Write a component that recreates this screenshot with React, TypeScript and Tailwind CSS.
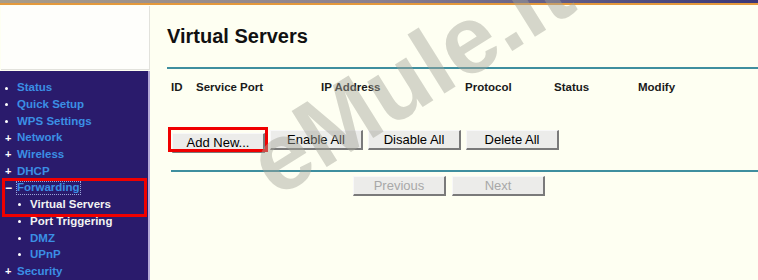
const menu = [
  { label: 'Status', mark: 'dot', level: 0 },
  { label: 'Quick Setup', mark: 'dot', level: 0 },
  { label: 'WPS Settings', mark: 'dot', level: 0 },
  { label: 'Network', mark: 'plus', level: 0 },
  { label: 'Wireless', mark: 'plus', level: 0 },
  { label: 'DHCP', mark: 'plus', level: 0 },
  { label: 'Forwarding', mark: 'minus', level: 0, focused: true },
  { label: 'Virtual Servers', mark: 'dot', level: 1, active: true },
  { label: 'Port Triggering', mark: 'dot', level: 1, active: true },
  { label: 'DMZ', mark: 'dot', level: 1 },
  { label: 'UPnP', mark: 'dot', level: 1 },
  { label: 'Security', mark: 'plus', level: 0 },
];

const columns = ['ID', 'Service Port', 'IP Address', 'Protocol', 'Status', 'Modify'];

function Mark({ type }: { type: string }) {
  if (type === 'plus') return <span className="w-[9px] text-white text-[11px] leading-none font-bold">+</span>;
  if (type === 'minus') return <span className="w-[9px] text-white text-[12px] leading-none font-bold">−</span>;
  return (
    <span className="w-[9px] flex items-center">
      <span className="w-[3px] h-[3px] rounded-full bg-white" />
    </span>
  );
}

function WinButton({ label, disabled }: { label: string; disabled?: boolean }) {
  return (
    <button
      className={
        'w-[93px] h-[20px] bg-[#ececea] border border-t-[#f8f8f8] border-l-[#f8f8f8] border-r-[2px] border-b-[2px] border-r-[#7a7a7a] border-b-[#7a7a7a] text-[13px] leading-none ' +
        (disabled ? 'text-[#a8a8a8]' : 'text-black')
      }
    >
      {label}
    </button>
  );
}

export default function App() {
  return (
    <div className="relative w-[758px] h-[280px] overflow-hidden bg-[#fefff2] font-['Liberation_Sans',Arial,sans-serif]">
      {/* top strip */}
      <div className="h-[3px] bg-gradient-to-r from-[#a89c88] via-[#8a8090] to-[#3a3678]" />
      <div className="h-[2px] bg-[#e4993c]" />

      <div className="flex h-[275px]">
        {/* Sidebar */}
        <div className="relative w-[150px] flex flex-col">
          <div className="h-[64px] mt-[1px] ml-[1px] bg-[#fefefb] border-r border-b border-[#e2e2dc]" />
          <div className="mt-[1px] flex-1 bg-[#2a1b6c] border-r-[2px] border-[#b3a8d6] pt-[9px]">
            {menu.map((m) => (
              <div
                key={m.label}
                className={'flex items-center h-[16.7px] ' + (m.level ? 'pl-[18px]' : 'pl-[5px]')}
              >
                <Mark type={m.mark} />
                <span
                  className={
                    'ml-[3px] text-[11.5px] font-bold leading-none ' +
                    (m.active ? 'text-[#f2f2f2]' : 'text-[#3b8fe4]') +
                    (m.focused ? ' outline-1 outline-dotted outline-[#9aa6d8]' : '')
                  }
                >
                  {m.label}
                </span>
              </div>
            ))}
          </div>
          <div className="absolute left-[2px] top-[173px] w-[145px] h-[39px] border-[3px] border-[#f00000]" />
        </div>

        {/* Main */}
        <div className="flex-1 pl-[17px]">
          <h1 className="mt-[19px] text-[20px] font-bold text-[#111] leading-[24px]">Virtual Servers</h1>
          <div className="mt-[19px] h-[2px] bg-[#3f8f9f]" />
          <div className="mt-[11px] pl-[4px] grid grid-cols-[25px_125px_144px_89px_84px_auto] text-[11.5px] font-bold text-[#1a1a1a] leading-[14px]">
            {columns.map((c) => (
              <span key={c}>{c}</span>
            ))}
          </div>
          <div className="mt-[36px] pl-[5px] flex gap-[5px]">
            <div className="relative">
              <WinButton label="Add New..." />
              <div className="absolute -left-[4px] -top-[3px] w-[100px] h-[25px] border-[3px] border-[#f00000]" />
            </div>
            <WinButton label="Enable All" />
            <WinButton label="Disable All" />
            <WinButton label="Delete All" />
          </div>
          <div className="mt-[16px] ml-[4px] h-[2px] bg-[#3f8f9f]" />
          <div className="mt-[4px] pl-[186px] flex gap-[6px]">
            <WinButton label="Previous" disabled />
            <WinButton label="Next" disabled />
          </div>
        </div>
      </div>

      {/* watermark */}
      <div className="pointer-events-none absolute left-[190px] top-[28px] w-[440px] text-center -rotate-[32deg] text-[96px] font-bold leading-none text-[#a4a49a]/45 font-['Liberation_Sans',Arial,sans-serif]">
        eMule.it
      </div>
    </div>
  );
}
